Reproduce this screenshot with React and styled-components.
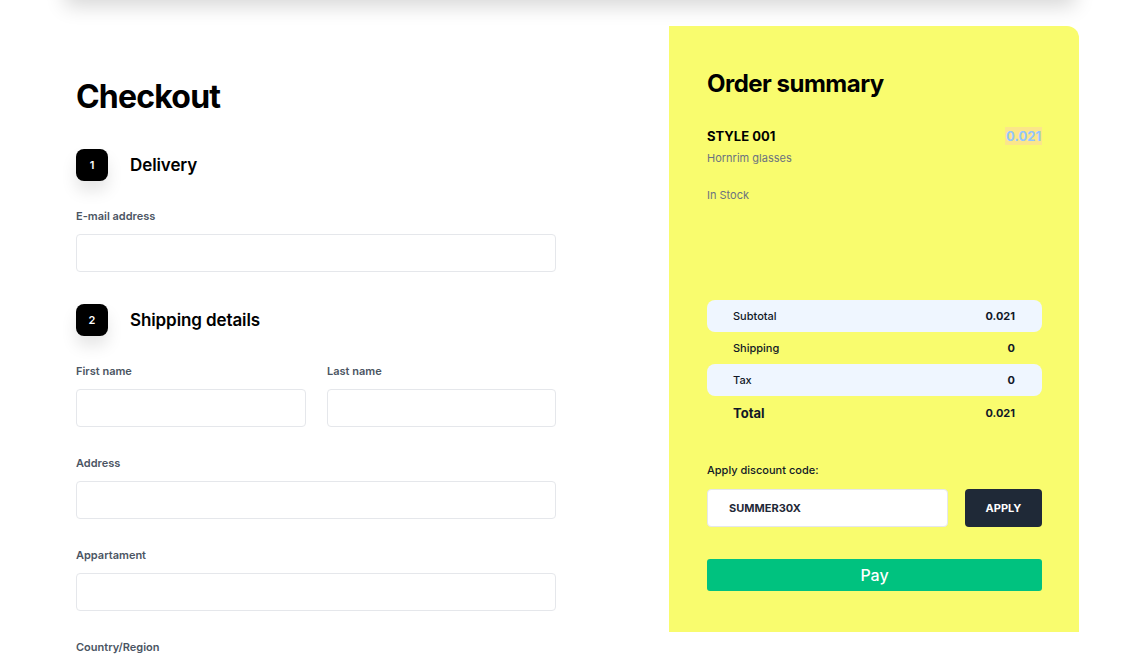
import React from 'react';
import styled, { createGlobalStyle } from 'styled-components';

const GlobalStyle = createGlobalStyle`
  body {
    margin: 0;
    background: #ffffff;
    font-family: Inter, "Noto Sans", sans-serif;
    color: #000000;
  }
  * { box-sizing: border-box; }
`;

const TopBar = styled.div`
  width: 1010px;
  height: 40px;
  margin: -40px auto 0;
  background: #ffffff;
  box-shadow: 0 6px 20px rgba(0, 0, 0, 0.16);
`;

const Main = styled.main`
  width: 1044px;
  margin: 0 auto;
  display: flex;
  justify-content: space-between;
  align-items: flex-start;
  padding: 26px 13px 0 28px;
`;

const FormColumn = styled.section`
  width: 480px;
  display: flex;
  flex-direction: column;
`;

const Title = styled.h1`
  margin: 51px 0 32px;
  font-size: 32px;
  line-height: 40px;
  font-weight: 700;
  letter-spacing: -0.8px;
`;

const Step = styled.div`
  display: flex;
  align-items: center;
  gap: 22px;
  margin-bottom: 26px;
`;

const Badge = styled.div`
  width: 32px;
  height: 32px;
  border-radius: 8px;
  background: #000000;
  color: #ffffff;
  font-size: 11px;
  font-weight: 600;
  display: flex;
  align-items: center;
  justify-content: center;
  box-shadow: 0 10px 16px rgba(0, 0, 0, 0.1);
`;

const StepTitle = styled.h2`
  margin: 0;
  font-size: 17px;
  line-height: 24px;
  font-weight: 600;
  letter-spacing: -0.1px;
`;

const FieldRow = styled.div`
  display: grid;
  grid-template-columns: ${p => (p.$cols === 2 ? '230px 229px' : '1fr')};
  justify-content: space-between;
  margin-bottom: ${p => p.$mb ?? 27}px;
`;

const Field = styled.label`
  display: flex;
  flex-direction: column;
  gap: 10px;
`;

const Label = styled.span`
  font-size: 11px;
  line-height: 16px;
  font-weight: 600;
  color: #4b5563;
  margin-top: 1px;
`;

const Input = styled.input`
  height: 38px;
  width: 100%;
  border: 1px solid #e5e7eb;
  border-radius: 4px;
  background: #ffffff;
  padding: 0 12px;
  font: inherit;
  outline: none;
`;

const Summary = styled.aside`
  width: 410px;
  background: #f9fc6e;
  border-top-right-radius: 12px;
  padding: 42px 37px 41px 38px;
  display: flex;
  flex-direction: column;
`;

const SummaryTitle = styled.h2`
  margin: 0 0 26px;
  font-size: 24px;
  line-height: 32px;
  font-weight: 700;
  letter-spacing: -0.5px;
`;

const ItemHead = styled.div`
  display: flex;
  justify-content: space-between;
  align-items: center;
  height: 20px;
`;

const ItemName = styled.span`
  font-size: 13px;
  font-weight: 700;
`;

const ItemPrice = styled.span`
  font-size: 13px;
  font-weight: 700;
  color: #93c5fd;
  background: #fbe68a;
  padding: 1px 1px;
`;

const Muted = styled.p`
  margin: ${p => p.$mt}px 0 0;
  font-size: 11px;
  line-height: 16px;
  color: #6b7280;
`;

const Totals = styled.div`
  margin-top: 97px;
  display: flex;
  flex-direction: column;
`;

const TotalRow = styled.div`
  display: flex;
  justify-content: space-between;
  align-items: center;
  height: ${p => (p.$big ? 34 : 32)}px;
  padding: 0 27px 0 26px;
  border-radius: 8px;
  background: ${p => (p.$shaded ? '#eff6ff' : 'transparent')};
  font-size: 11px;
  color: #111827;
`;

const RowLabel = styled.span`
  font-size: ${p => (p.$big ? 13 : 11)}px;
  font-weight: ${p => (p.$big ? 700 : 500)};
`;

const RowValue = styled.span`
  font-weight: 700;
`;

const DiscountLabel = styled.span`
  margin-top: 32px;
  font-size: 11px;
  line-height: 16px;
  font-weight: 500;
  color: #111827;
`;

const DiscountRow = styled.div`
  margin-top: 11px;
  display: flex;
  justify-content: space-between;
`;

const CodeInput = styled.input`
  width: 241px;
  height: 38px;
  border: 1px solid #e5e7eb;
  border-radius: 4px;
  background: #ffffff;
  padding: 0 21px;
  font-family: inherit;
  font-size: 11px;
  font-weight: 700;
  color: #1f2937;
  outline: none;
`;

const ApplyButton = styled.button`
  width: 77px;
  height: 38px;
  border: none;
  border-radius: 4px;
  background: #1f2937;
  color: #ffffff;
  font-family: inherit;
  font-size: 11px;
  font-weight: 700;
`;

const PayButton = styled.button`
  margin-top: 32px;
  height: 32px;
  border: none;
  border-radius: 3px;
  background: #00c27f;
  color: #ffffff;
  font-family: inherit;
  font-size: 16px;
  font-weight: 500;
`;

const totals = [
  { label: 'Subtotal', value: '0.021', shaded: true },
  { label: 'Shipping', value: '0' },
  { label: 'Tax', value: '0', shaded: true },
  { label: 'Total', value: '0.021', big: true },
];

const App = () => {
  return (
    <>
      <GlobalStyle />
      <TopBar />
      <Main>
        <FormColumn>
          <Title>Checkout</Title>
          <Step>
            <Badge>1</Badge>
            <StepTitle>Delivery</StepTitle>
          </Step>
          <FieldRow $mb={32}>
            <Field>
              <Label>E-mail address</Label>
              <Input type="email" />
            </Field>
          </FieldRow>
          <Step>
            <Badge>2</Badge>
            <StepTitle>Shipping details</StepTitle>
          </Step>
          <FieldRow $cols={2}>
            <Field>
              <Label>First name</Label>
              <Input />
            </Field>
            <Field>
              <Label>Last name</Label>
              <Input />
            </Field>
          </FieldRow>
          <FieldRow>
            <Field>
              <Label>Address</Label>
              <Input />
            </Field>
          </FieldRow>
          <FieldRow>
            <Field>
              <Label>Appartament</Label>
              <Input />
            </Field>
          </FieldRow>
          <FieldRow>
            <Field>
              <Label>Country/Region</Label>
              <Input />
            </Field>
          </FieldRow>
        </FormColumn>

        <Summary>
          <SummaryTitle>Order summary</SummaryTitle>
          <ItemHead>
            <ItemName>STYLE 001</ItemName>
            <ItemPrice>0.021</ItemPrice>
          </ItemHead>
          <Muted $mt={4}>Hornrim glasses</Muted>
          <Muted $mt={21}>In Stock</Muted>
          <Totals>
            {totals.map(t => (
              <TotalRow key={t.label} $shaded={t.shaded} $big={t.big}>
                <RowLabel $big={t.big}>{t.label}</RowLabel>
                <RowValue>{t.value}</RowValue>
              </TotalRow>
            ))}
          </Totals>
          <DiscountLabel>Apply discount code:</DiscountLabel>
          <DiscountRow>
            <CodeInput defaultValue="SUMMER30X" />
            <ApplyButton>APPLY</ApplyButton>
          </DiscountRow>
          <PayButton>Pay</PayButton>
        </Summary>
      </Main>
    </>
  );
};

export default App;
